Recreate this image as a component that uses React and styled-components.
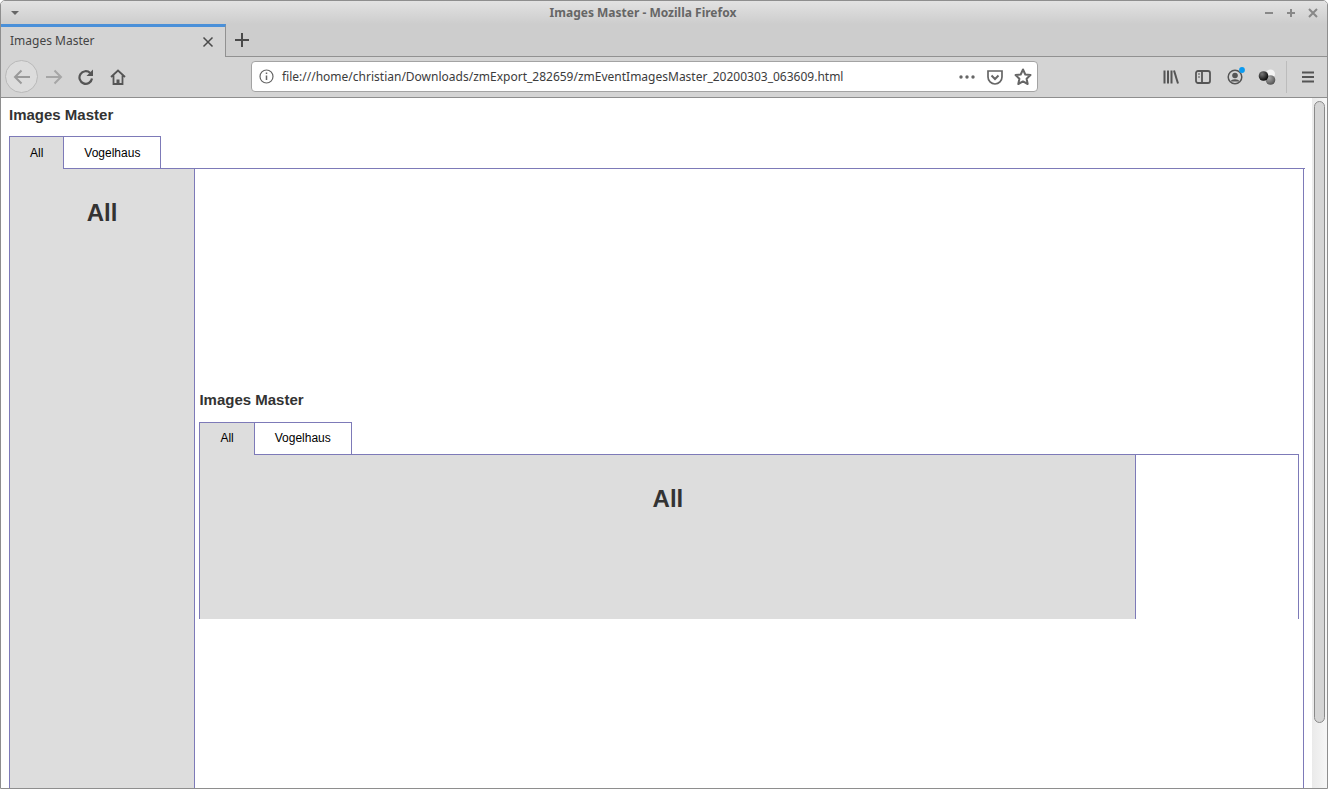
import React from 'react';
import styled, { createGlobalStyle } from 'styled-components';

const Global = createGlobalStyle`
  html, body { margin: 0; padding: 0; height: 100%; overflow: hidden; background: #fff; }
  #root { height: 100%; }
`;

const Win = styled.div`
  height: 789px;
  width: 1328px;
  box-sizing: border-box;
  display: flex;
  flex-direction: column;
  overflow: hidden;
  border: 1px solid #8e8e8e;
  border-radius: 5px 5px 0 0;
  background: #fff;
`;

const TitleBar = styled.div`
  flex: none;
  height: 23px;
  display: flex;
  align-items: center;
  padding: 0 8px 0 10px;
  background: linear-gradient(#e2e2e2, #cdcdcd);
  font: bold 12px "Noto Sans", sans-serif;
  color: #666;
`;

const MenuArrow = styled.div`
  width: 0;
  height: 0;
  border-left: 4px solid transparent;
  border-right: 4px solid transparent;
  border-top: 4px solid #666;
`;

const WinTitle = styled.div`
  flex: 1;
  text-align: center;
  padding-left: 4px;
`;

const WinBtns = styled.div`
  display: flex;
  gap: 10px;
  color: #888;
`;

const TabStrip = styled.div`
  flex: none;
  height: 33px;
  display: flex;
  background: #cdcdcd;
  box-sizing: border-box;
  border-bottom: 1px solid #919191;
`;

const BrowserTab = styled.div`
  width: 225px;
  height: 33px;
  box-sizing: border-box;
  display: flex;
  align-items: center;
  justify-content: space-between;
  padding: 0 11px 0 9px;
  background: #d4d4d4;
  border-top: 3px solid #4a90d9;
  border-right: 1px solid #919191;
  font: 12px "Noto Sans", sans-serif;
  color: #444;
`;

const TabLabel = styled.span`
  padding-bottom: 4px;
`;

const TabClose = styled.span`
  display: flex;
  color: #4a4a4a;
`;

const NewTab = styled.div`
  width: 31px;
  display: flex;
  align-items: center;
  justify-content: center;
  color: #4a4a4a;
`;

const NavBar = styled.div`
  flex: none;
  height: 41px;
  box-sizing: border-box;
  display: flex;
  align-items: center;
  padding: 0 3px 1px 4px;
  background: #d4d4d4;
  border-bottom: 1px solid #8e8e8e;
`;

const NavBtn = styled.div`
  flex: none;
  width: ${(p) => (p.$ring ? '33px' : '32px')};
  height: ${(p) => (p.$ring ? '33px' : '32px')};
  display: flex;
  align-items: center;
  justify-content: center;
  border-radius: 50%;
  box-sizing: border-box;
  color: ${(p) => p.$color || '#555'};
  ${(p) => p.$ring && 'border: 1px solid #b9b9b9; background: #dcdcdc;'}
`;

const UrlBar = styled.div`
  flex: none;
  width: 787px;
  height: 31px;
  margin: 0 117px 0 117px;
  box-sizing: border-box;
  display: flex;
  align-items: center;
  padding: 0 5px 0 7px;
  gap: 8px;
  background: #fff;
  border: 1px solid #a3a3a3;
  border-radius: 4px;
  font: 12px "Noto Sans", sans-serif;
  color: #3c3c3c;
`;

const UrlInfo = styled.span`
  display: flex;
  color: #666;
`;

const UrlText = styled.div`
  flex: 1;
  white-space: nowrap;
`;

const UrlIcons = styled.div`
  display: flex;
  align-items: center;
  gap: 10px;
  color: #666;
`;

const ToolSep = styled.div`
  width: 1px;
  height: 32px;
  margin: 0 5px 0 3px;
  background: #bcbcbc;
`;

const Content = styled.div`
  flex: 1;
  min-height: 0;
  display: flex;
`;

const Page = styled.div`
  flex: 1;
  min-width: 0;
  padding-left: 8px;
  overflow: hidden;
  font-family: "Liberation Sans", Arial, sans-serif;
`;

const Scrollbar = styled.div`
  flex: none;
  width: 15px;
  box-sizing: border-box;
  padding: 3px 2px 0 2px;
  background: linear-gradient(90deg, #eaeaea, #f6f6f6);
`;

const Thumb = styled.div`
  height: 622px;
  box-sizing: border-box;
  background: #d5d5d5;
  border: 1px solid #8a8a8a;
  border-radius: 6px;
`;

const Heading = styled.h3`
  margin: 0;
  height: ${(p) => p.$height}px;
  padding-top: 8px;
  box-sizing: border-box;
  font-size: 15px;
  line-height: 17px;
  font-weight: bold;
  color: #333;
`;

const Tabs = styled.div`
  display: flex;
  height: 32px;
  box-sizing: border-box;
`;

const Tab = styled.div`
  height: 33px;
  box-sizing: border-box;
  padding: 0 20px ${(p) => p.$lift || 0}px;
  display: flex;
  align-items: center;
  font-size: 12px;
  color: #000;
  position: relative;
  z-index: 1;
  border: 1px solid #7d7ab8;
  border-left-width: ${(p) => (p.$first ? '1px' : '0')};
  border-bottom: ${(p) => (p.$active ? '0' : '1px solid #7d7ab8')};
  background: ${(p) => (p.$active ? '#ddd' : '#fff')};
`;

const Panel = styled.div`
  border-top: 1px solid #7d7ab8;
  width: ${(p) => p.$width}px;
`;

const PanelBody = styled.div`
  display: flex;
  box-sizing: border-box;
  height: ${(p) => p.$height}px;
  width: ${(p) => p.$width}px;
  border-left: 1px solid #7d7ab8;
  border-right: 1px solid #7d7ab8;
`;

const Side = styled.div`
  flex: none;
  width: ${(p) => p.$width}px;
  box-sizing: content-box;
  background: #ddd;
  border-right: 1px solid #7d7ab8;
  text-align: center;
`;

const SideTitle = styled.h1`
  margin: 0;
  padding-top: 30px;
  font-size: 24px;
  line-height: 28px;
  font-weight: bold;
  color: #333;
`;

const Main = styled.div`
  flex: 1;
  min-width: 0;
  padding: 214px 0 0 4.4px;
`;

const Ic = ({ w = 16, h = 16, children }) => (
  <svg width={w} height={h} viewBox={`0 0 ${w} ${h}`} fill="none" stroke="currentColor" strokeWidth="2">
    {children}
  </svg>
);

const TabBlock = ({ titleHeight, lift, width, bodyWidth, height, sideWidth, children }) => (
  <>
    <Heading $height={titleHeight}>Images Master</Heading>
    <Tabs>
      <Tab $first $active $lift={lift}>All</Tab>
      <Tab $lift={lift}>Vogelhaus</Tab>
    </Tabs>
    <Panel $width={width}>
      <PanelBody $width={bodyWidth} $height={height}>
        <Side $width={sideWidth}>
          <SideTitle>All</SideTitle>
        </Side>
        {children}
      </PanelBody>
    </Panel>
  </>
);

export default function App() {
  return (
    <Win>
      <Global />
      <TitleBar>
        <MenuArrow />
        <WinTitle>Images Master - Mozilla Firefox</WinTitle>
        <WinBtns>
          <Ic w={12} h={12}><path d="M2 6h8" /></Ic>
          <Ic w={12} h={12}><path d="M2 6h8M6 2v8" /></Ic>
          <Ic w={12} h={12}><path d="M2 2l8 8M10 2l-8 8" /></Ic>
        </WinBtns>
      </TitleBar>
      <TabStrip>
        <BrowserTab>
          <TabLabel>Images Master</TabLabel>
          <TabClose>
            <Ic w={12} h={12}><path d="M1.500 1.500l9 9M10.500 1.500l-9 9" strokeWidth="1.500" /></Ic>
          </TabClose>
        </BrowserTab>
        <NewTab>
          <Ic w={14} h={14}><path d="M7 0v14M0 7h14" /></Ic>
        </NewTab>
      </TabStrip>
      <NavBar>
        <NavBtn $ring $color="#9a9a9a">
          <Ic w={18} h={16}><path d="M17 8H2M8.500 1.500L2 8l6.500 6.500" /></Ic>
        </NavBtn>
        <NavBtn $color="#a6a6a6">
          <Ic w={18} h={16}><path d="M1 8h15M9.500 1.500L16 8l-6.500 6.500" /></Ic>
        </NavBtn>
        <NavBtn>
          <Ic w={16} h={16}>
            <path d="M14 9.500A6.300 6.300 0 1 1 12.200 4" strokeWidth="2.200" />
            <path d="M15 .5v6.500H8.500z" fill="currentColor" stroke="none" />
          </Ic>
        </NavBtn>
        <NavBtn>
          <Ic w={16} h={16}>
            <path d="M1 8l7-6.500L15 8M3.500 6.500V15h9V6.500" strokeWidth="1.800" />
            <path d="M6.500 15v-4.500h3V15" fill="currentColor" stroke="none" />
          </Ic>
        </NavBtn>
        <UrlBar>
          <UrlInfo>
            <svg width="15" height="15" viewBox="0 0 15 15" fill="none" stroke="currentColor">
              <circle cx="7.500" cy="7.500" r="6.500" strokeWidth="1.200" />
              <path d="M7.500 6.500v4.500" strokeWidth="1.500" />
              <path d="M7.500 3.500v1.500" strokeWidth="1.500" />
            </svg>
          </UrlInfo>
          <UrlText>file:///home/christian/Downloads/zmExport_282659/zmEventImagesMaster_20200303_063609.html</UrlText>
          <UrlIcons>
            <svg width="18" height="16" viewBox="0 0 18 16" fill="currentColor">
              <circle cx="3" cy="8" r="1.700" /><circle cx="9" cy="8" r="1.700" /><circle cx="15" cy="8" r="1.700" />
            </svg>
            <Ic w={18} h={16}>
              <path d="M2 2h14v6a7 7 0 0 1-14 0z" strokeWidth="1.700" />
              <path d="M5.500 6.500L9 10l3.500-3.500" />
            </Ic>
            <svg width="18" height="18" viewBox="0 0 18 18" fill="none" stroke="currentColor" strokeWidth="2" strokeLinejoin="round">
              <path d="M9 1.500l2.300 5 5.200.6-3.900 3.600 1.100 5.300L9 13.400 4.300 16l1.100-5.300L1.500 7.100l5.200-.6z" />
            </svg>
          </UrlIcons>
        </UrlBar>
        <NavBtn>
          <Ic w={16} h={16}><path d="M1.500 1.500v13M5 1.500v13M8.500 1.500v13" /><path d="M11 1.500l4 13" /></Ic>
        </NavBtn>
        <NavBtn>
          <Ic w={16} h={16}>
            <rect x="1" y="2" width="14" height="12" rx="2" strokeWidth="1.800" />
            <path d="M7 2v12" strokeWidth="1.800" />
            <path d="M3 5h2M3 8h2" strokeWidth="1.200" />
          </Ic>
        </NavBtn>
        <NavBtn>
          <svg width="20" height="20" viewBox="0 0 20 20" fill="none" stroke="currentColor" strokeWidth="1.500">
            <circle cx="10" cy="10" r="6.800" />
            <circle cx="10" cy="8.500" r="2.800" fill="currentColor" stroke="none" />
            <path d="M5.500 14.500c1-3 8-3 9 0" fill="currentColor" stroke="none" />
            <circle cx="17" cy="3" r="2.900" fill="#0a9af0" stroke="none" />
          </svg>
        </NavBtn>
        <NavBtn>
          <svg width="18" height="16" viewBox="0 0 18 16">
            <defs>
              <radialGradient id="ballDark" cx="35%" cy="30%" r="70%">
                <stop offset="0" stopColor="#777" /><stop offset="1" stopColor="#0c0c0c" />
              </radialGradient>
              <radialGradient id="ballGrey" cx="35%" cy="30%" r="70%">
                <stop offset="0" stopColor="#aaa" /><stop offset="1" stopColor="#555" />
              </radialGradient>
            </defs>
            <circle cx="12.500" cy="5" r="4.500" fill="#f4f4f4" />
            <circle cx="12.500" cy="11" r="4.800" fill="url(#ballGrey)" />
            <circle cx="5.500" cy="7" r="4.800" fill="url(#ballDark)" />
          </svg>
        </NavBtn>
        <ToolSep />
        <NavBtn>
          <Ic w={14} h={14}><path d="M1 2.500h12M1 7h12M1 11.500h12" strokeWidth="1.800" /></Ic>
        </NavBtn>
      </NavBar>
      <Content>
        <Page>
          <TabBlock titleHeight={38} width={1296} bodyWidth={1295} height={620} sideWidth={184}>
            <Main>
              <TabBlock titleHeight={39} lift={2} width={1100} bodyWidth={1100} height={164} sideWidth={935} />
            </Main>
          </TabBlock>
        </Page>
        <Scrollbar>
          <Thumb />
        </Scrollbar>
      </Content>
    </Win>
  );
}
